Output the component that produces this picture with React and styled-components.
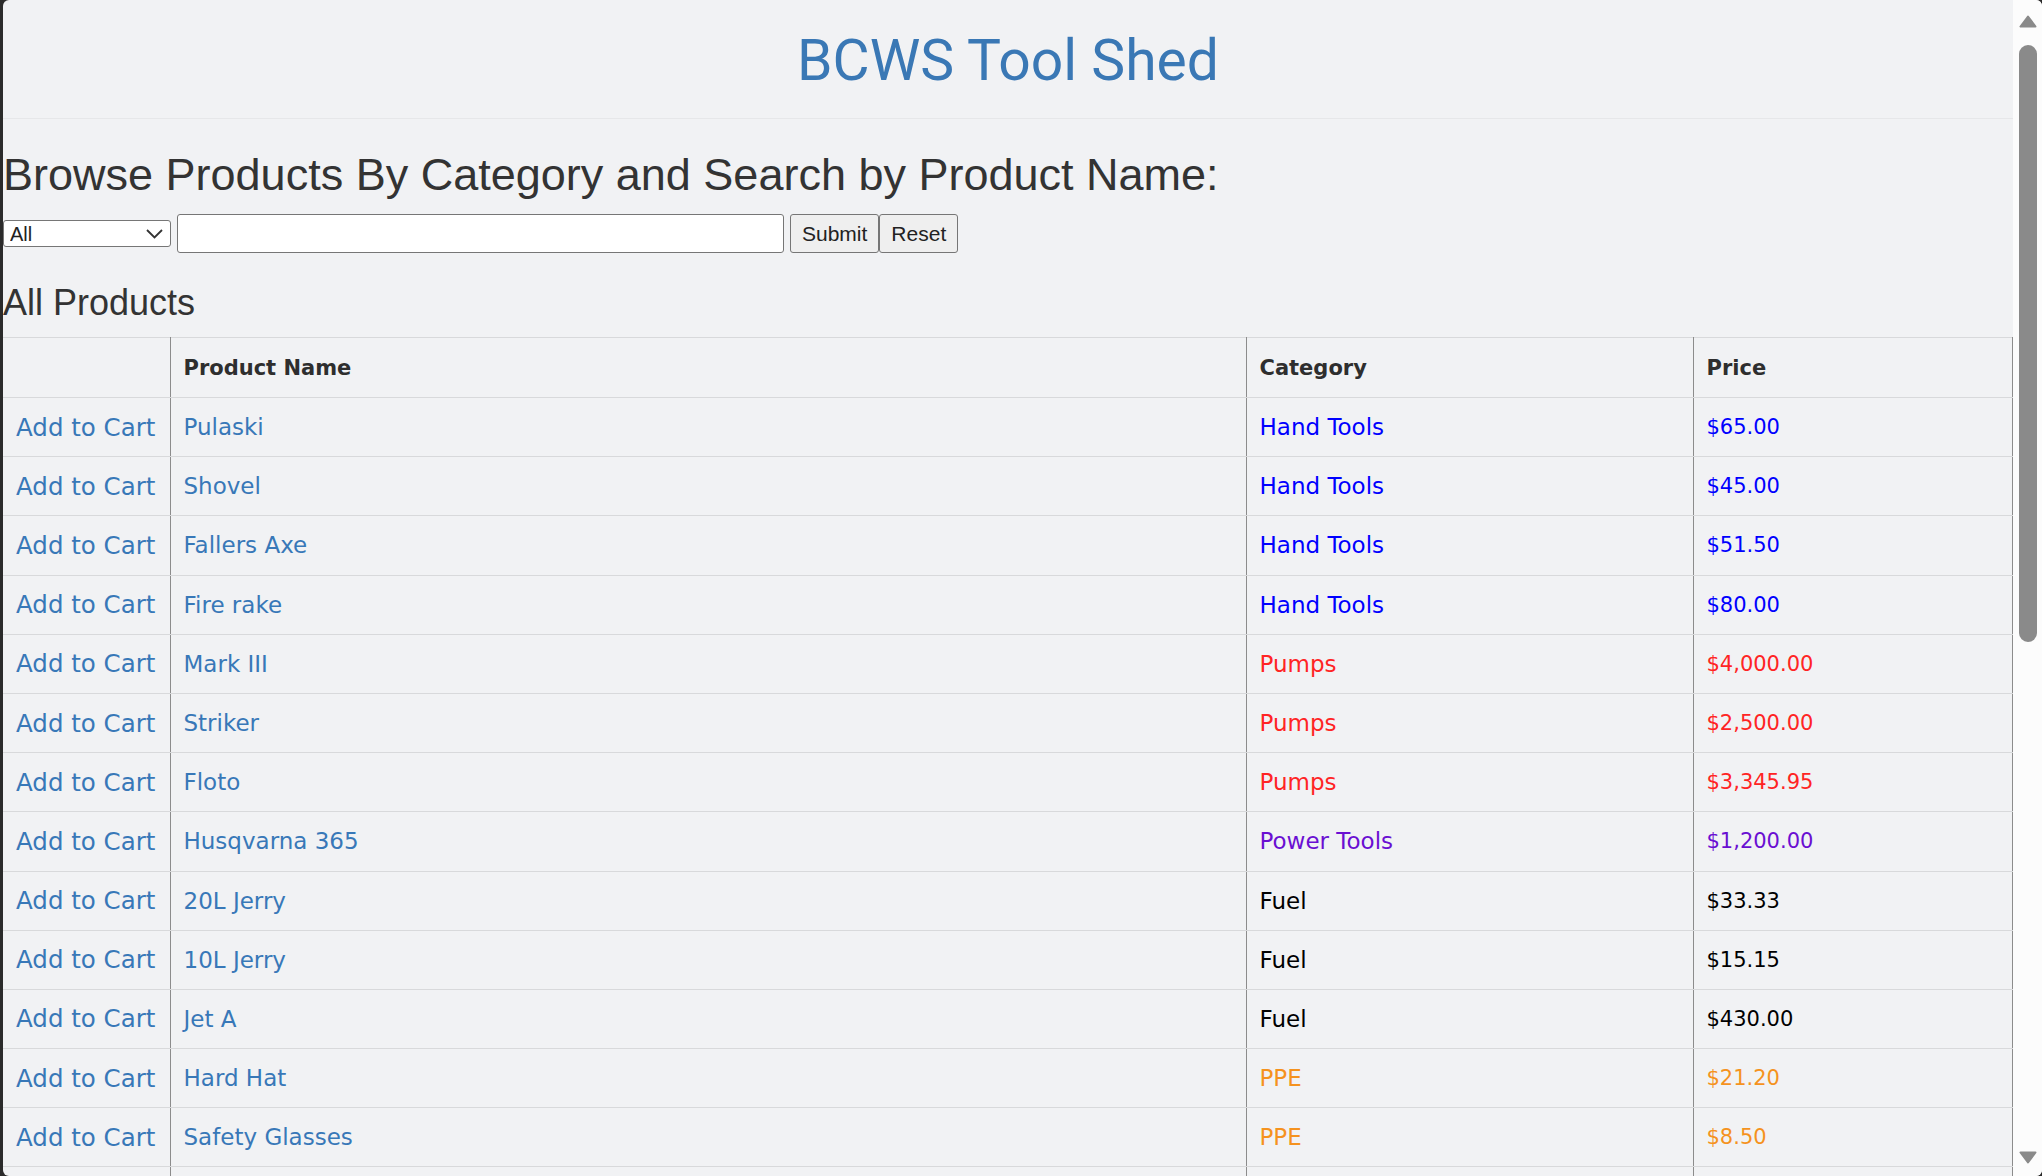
import React from "react";
import styled, { createGlobalStyle } from "styled-components";

const GlobalStyle = createGlobalStyle`
  html, body {
    margin: 0;
    padding: 0;
    height: 100%;
    overflow: hidden;
    background: #2b2b2b;
  }
  #root {
    height: 100%;
  }
  * {
    box-sizing: border-box;
  }
`;

const Frame = styled.div`
  display: flex;
  height: 100vh;
  padding-left: 3px;
  background: #2b2b2b;
`;

const Viewport = styled.div`
  flex: 1;
  display: flex;
  min-width: 0;
  overflow: hidden;
  background: #f1f2f4;
  border-radius: 6px;
`;

const Page = styled.div`
  flex: 1;
  min-width: 0;
  overflow: hidden;
`;

const Header = styled.header`
  height: 119px;
  display: flex;
  align-items: center;
  justify-content: center;
  border-bottom: 1px solid #e6e7e9;
`;

const Title = styled.h1`
  margin: 2px 0 0;
  font-family: Roboto, "DejaVu Sans", sans-serif;
  font-weight: 400;
  font-size: 57px;
  line-height: 1;
  color: #3a78b5;
`;

const Main = styled.main`
  padding: 0;
`;

const Heading = styled.h2`
  margin: ${(p) => p.$margin};
  font-family: "Liberation Sans", Arial, sans-serif;
  font-weight: 400;
  font-size: ${(p) => p.$size}px;
  line-height: ${(p) => p.$lh}px;
  color: #333;
`;

const SearchForm = styled.form`
  display: flex;
  align-items: center;
  height: 39px;
  margin: 0;
`;

const SelectWrap = styled.div`
  position: relative;
  display: flex;
`;

const Select = styled.select`
  appearance: none;
  -webkit-appearance: none;
  width: 168px;
  height: 27px;
  font-family: "Liberation Sans", Arial, sans-serif;
  font-size: 20px;
  line-height: 25px;
  color: #222;
  background: #fff;
  border: 1px solid #767676;
  border-radius: 3px;
  padding: 1px 0 0 6px;
  margin: 0;
  outline: none;
`;

const Chevron = styled.svg`
  position: absolute;
  right: 8px;
  top: 9px;
  pointer-events: none;
`;

const TextInput = styled.input`
  width: 607px;
  height: 39px;
  margin: 0 0 0 6px;
  background: #fff;
  border: 1px solid #767676;
  border-radius: 3px;
  font-family: "Liberation Sans", Arial, sans-serif;
  font-size: 20px;
`;

const Button = styled.button`
  height: 39px;
  margin: 0 0 0 ${(p) => p.$gap}px;
  padding: 0 11px;
  background: #efefef;
  border: 1px solid #767676;
  border-radius: 3px;
  font-family: "Liberation Sans", Arial, sans-serif;
  font-size: 21px;
  color: #222;
`;

const Table = styled.table`
  width: 100%;
  border-collapse: collapse;
  table-layout: fixed;
  border-top: 1px solid #d8d9db;
`;

const HeadRow = styled.tr`
  height: 60px;
`;

const BodyRow = styled.tr`
  height: 59.2px;
`;

const Cell = styled.td`
  padding: 0 13px;
  border-bottom: 1px solid #d8d9db;
  border-left: ${(p) => (p.$first ? "none" : "1px solid #8c8c8c")};
  border-right: ${(p) => (p.$last ? "1px solid #8c8c8c" : "none")};
  font-family: "DejaVu Sans", sans-serif;
  font-size: ${(p) => p.$size || 23}px;
  white-space: nowrap;
  color: ${(p) => p.$color || "#3878b8"};
  vertical-align: middle;
`;

const HeadCell = styled(Cell).attrs({ as: "th" })`
  text-align: left;
  font-weight: 700;
  font-size: 21px;
  color: #2e2e2e;
`;

const Link = styled.a`
  color: inherit;
  text-decoration: none;
  cursor: pointer;
`;

const ScrollTrack = styled.div`
  width: 29px;
  flex: none;
  display: flex;
  flex-direction: column;
  align-items: center;
  padding: 15px 0 12px;
  background: #fcfcfc;
`;

const Thumb = styled.div`
  width: 18px;
  height: 597px;
  margin-top: 17px;
  border-radius: 9px;
  background: #8a8a8a;
`;

const Spacer = styled.div`
  flex: 1;
`;

const Arrow = ({ down }) => (
  <svg width="18" height="13" viewBox="0 0 18 13">
    <path
      d={down ? "M1.5 1.5 H16.5 L9 11.5 Z" : "M1.5 11.5 H16.5 L9 1.5 Z"}
      fill="#8a8a8a"
      stroke="#8a8a8a"
      strokeWidth="2"
      strokeLinejoin="round"
    />
  </svg>
);

const CATEGORY_COLORS = {
  "Hand Tools": "#0000ff",
  Pumps: "#ff2424",
  "Power Tools": "#6a0fd2",
  Fuel: "#000000",
  PPE: "#f5921e",
};

const PRODUCTS = [
  ["Pulaski", "Hand Tools", "$65.00"],
  ["Shovel", "Hand Tools", "$45.00"],
  ["Fallers Axe", "Hand Tools", "$51.50"],
  ["Fire rake", "Hand Tools", "$80.00"],
  ["Mark III", "Pumps", "$4,000.00"],
  ["Striker", "Pumps", "$2,500.00"],
  ["Floto", "Pumps", "$3,345.95"],
  ["Husqvarna 365", "Power Tools", "$1,200.00"],
  ["20L Jerry", "Fuel", "$33.33"],
  ["10L Jerry", "Fuel", "$15.15"],
  ["Jet A", "Fuel", "$430.00"],
  ["Hard Hat", "PPE", "$21.20"],
  ["Safety Glasses", "PPE", "$8.50"],
];

export default function App() {
  return (
    <>
      <GlobalStyle />
      <Frame>
        <Viewport>
          <Page>
            <Header>
              <Title>BCWS Tool Shed</Title>
            </Header>
            <Main>
              <Heading as="h1" $size={45} $lh={52} $margin="30px 0 13px">
                Browse Products By Category and Search by Product Name:
              </Heading>
              <SearchForm onSubmit={(e) => e.preventDefault()}>
                <SelectWrap>
                  <Select defaultValue="All">
                    <option>All</option>
                    <option>Hand Tools</option>
                    <option>Pumps</option>
                    <option>Power Tools</option>
                    <option>Fuel</option>
                    <option>PPE</option>
                  </Select>
                  <Chevron width="17" height="10" viewBox="0 0 17 10">
                    <path
                      d="M1 1 L8.5 8.5 L16 1"
                      fill="none"
                      stroke="#333"
                      strokeWidth="1.8"
                    />
                  </Chevron>
                </SelectWrap>
                <TextInput type="text" />
                <Button type="submit" $gap={6}>Submit</Button>
                <Button type="reset" $gap={0}>Reset</Button>
              </SearchForm>
              <Heading $size={36} $lh={41} $margin="29px 0 14px">
                All Products
              </Heading>
              <Table>
                <colgroup>
                  <col style={{ width: 167 }} />
                  <col style={{ width: 1076 }} />
                  <col style={{ width: 447 }} />
                  <col />
                </colgroup>
                <thead>
                  <HeadRow>
                    <HeadCell $first></HeadCell>
                    <HeadCell>Product Name</HeadCell>
                    <HeadCell>Category</HeadCell>
                    <HeadCell $last>Price</HeadCell>
                  </HeadRow>
                </thead>
                <tbody>
                  {PRODUCTS.map(([name, cat, price]) => (
                    <BodyRow key={name}>
                      <Cell $first $size={24.5}>
                        <Link>Add to Cart</Link>
                      </Cell>
                      <Cell>
                        <Link>{name}</Link>
                      </Cell>
                      <Cell $color={CATEGORY_COLORS[cat]}>{cat}</Cell>
                      <Cell $last $size={21} $color={CATEGORY_COLORS[cat]}>
                        {price}
                      </Cell>
                    </BodyRow>
                  ))}
                  <BodyRow>
                    <Cell $first />
                    <Cell />
                    <Cell />
                    <Cell $last />
                  </BodyRow>
                </tbody>
              </Table>
            </Main>
          </Page>
          <ScrollTrack>
            <Arrow />
            <Thumb />
            <Spacer />
            <Arrow down />
          </ScrollTrack>
        </Viewport>
      </Frame>
    </>
  );
}
